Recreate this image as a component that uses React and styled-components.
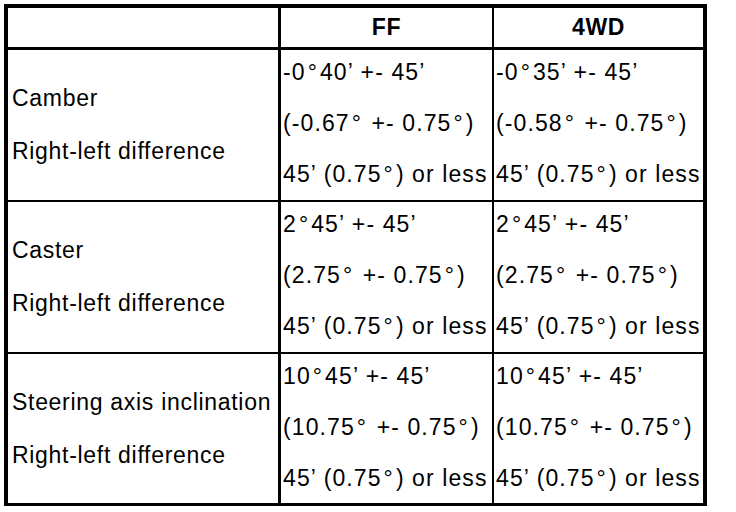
import React from 'react';
import styled, { createGlobalStyle } from 'styled-components';

const GlobalStyle = createGlobalStyle`
  html, body {
    margin: 0;
    padding: 0;
    background: #fff;
  }
  body {
    font-family: 'Liberation Sans', Arial, sans-serif;
    color: #000;
  }
`;

const Page = styled.div`
  padding: 4px 0 0 4px;
`;

const Grid = styled.div`
  display: grid;
  grid-template-columns: 273px 213px 209px;
  grid-template-rows: 42px 152px 152px 149px;
  width: max-content;
  border-style: solid;
  border-color: #000;
  border-width: 4px 4px 3px 4px;
  font-size: 23px;
  letter-spacing: 0.7px;
`;

const Cell = styled.div`
  box-sizing: border-box;
  border-style: solid;
  border-color: #000;
  border-width: 0 ${({ $right }) => $right || 0}px ${({ $bottom }) => $bottom || 0}px 0;
`;

const HeadCell = styled(Cell)`
  display: flex;
  align-items: center;
  justify-content: center;
  font-weight: bold;
`;

const LabelCell = styled(Cell)`
  display: flex;
  flex-direction: column;
  justify-content: center;
  padding-left: 4px;
  line-height: 53px;
  white-space: nowrap;
`;

const ValueCell = styled(Cell)`
  display: flex;
  flex-direction: column;
  gap: 6px;
  padding-left: 2px;
  line-height: 45px;
  letter-spacing: 1.1px;
  white-space: nowrap;
`;

const Deg = styled.span`
  margin: 0 2px;
`;

// split a value on the degree sign so the sign gets its own spacing
const Value = ({ text }) => {
  const parts = text.split('°');
  return (
    <span>
      {parts.map((p, i) => (
        <React.Fragment key={i}>
          {p}
          {i < parts.length - 1 && <Deg>°</Deg>}
        </React.Fragment>
      ))}
    </span>
  );
};

const rows = [
  {
    label: 'Camber',
    ff: ['-0°40’ +- 45’', '(-0.67° +- 0.75°)', '45’ (0.75°) or less'],
    wd: ['-0°35’ +- 45’', '(-0.58° +- 0.75°)', '45’ (0.75°) or less'],
  },
  {
    label: 'Caster',
    ff: ['2°45’ +- 45’', '(2.75° +- 0.75°)', '45’ (0.75°) or less'],
    wd: ['2°45’ +- 45’', '(2.75° +- 0.75°)', '45’ (0.75°) or less'],
  },
  {
    label: 'Steering axis inclination',
    ff: ['10°45’ +- 45’', '(10.75° +- 0.75°)', '45’ (0.75°) or less'],
    wd: ['10°45’ +- 45’', '(10.75° +- 0.75°)', '45’ (0.75°) or less'],
  },
];

export default function App() {
  return (
    <Page>
      <GlobalStyle />
      <Grid>
        <HeadCell $right={3} $bottom={3} />
        <HeadCell $right={2} $bottom={3}>FF</HeadCell>
        <HeadCell $bottom={3}>4WD</HeadCell>
        {rows.map((row, i) => {
          const bottom = i < rows.length - 1 ? 2 : 0;
          return (
            <React.Fragment key={row.label}>
              <LabelCell $right={3} $bottom={bottom}>
                <span>{row.label}</span>
                <span>Right-left difference</span>
              </LabelCell>
              <ValueCell $right={2} $bottom={bottom}>
                {row.ff.map((t, j) => (
                  <Value key={j} text={t} />
                ))}
              </ValueCell>
              <ValueCell $bottom={bottom}>
                {row.wd.map((t, j) => (
                  <Value key={j} text={t} />
                ))}
              </ValueCell>
            </React.Fragment>
          );
        })}
      </Grid>
    </Page>
  );
}
